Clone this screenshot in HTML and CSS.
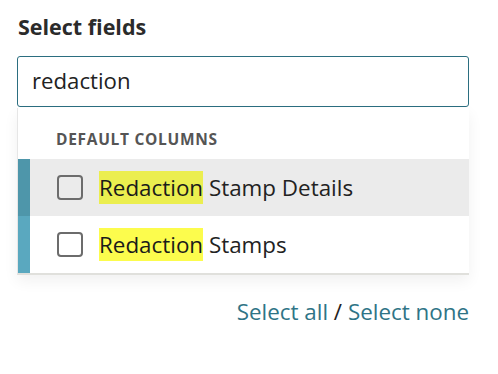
FILE: index.html
```html
<!DOCTYPE html>
<html>
<head>
<meta charset="utf-8">
<link rel="stylesheet" href="styles.css">
</head>
<body>
<div class="panel">
  <div class="title">Select fields</div>
  <div class="input">redaction</div>
  <div class="dropdown">
    <div class="group">DEFAULT COLUMNS</div>
    <div class="option hover">
      <span class="box"></span>
      <span class="label"><mark>Redaction</mark> Stamp Details</span>
    </div>
    <div class="option">
      <span class="box"></span>
      <span class="label"><mark>Redaction</mark> Stamps</span>
    </div>
  </div>
  <div class="actions"><a>Select all</a> / <a>Select none</a></div>
</div>
</body>
</html>
```
FILE: styles.css
```css
html, body { margin: 0; padding: 0; background: #fff; }
body { font-family: "Open Sans", "Noto Sans", sans-serif; color: #222; }
.panel { width: 452px; padding: 12px 0 0 17px; }
.title { font-size: 21.5px; font-weight: 700; color: #2b2b2b; line-height: 30px; padding-left: 1px; }
.input {
  margin-top: 14px;
  height: 49px;
  border: 1px solid #2b6e80;
  border-radius: 3px;
  box-sizing: content-box;
  font-size: 22.2px;
  line-height: 48px;
  padding-left: 14px;
  color: #222;
  width: 436px;
}
.dropdown {
  margin-top: 1px;
  border-left: 1px solid #e6e6e6;
  border-bottom: 2px solid #e0e0dc;
  box-shadow: 0 6px 14px rgba(0,0,0,0.06);
  background: #fff;
}
.group {
  font-size: 15.5px; font-weight: 700; letter-spacing: 0.7px; color: #555;
  padding: 20px 0 0 38px; height: 31px; line-height: 22px;
}
.option {
  display: flex; align-items: center; height: 57px;
  border-left: 12px solid #5aa8bf;
  background: #fff;
}
.option.hover { background: #ebebeb; border-left-color: #4e96aa; }
.box {
  width: 22px; height: 21px; border: 2px solid #6c6c6c; border-radius: 4px;
  margin-left: 27px; flex: none;
}
.label { font-size: 22.4px; margin-left: 16px; line-height: 31px; color: #222; }
mark { background: #fcfc4d; color: #1a1a1a; padding: 1px 0; }
.option.hover mark { background: #ebee4f; }
.actions { text-align: right; font-size: 22.4px; padding-top: 21px; padding-right: 0; color: #222; }
.actions a { color: #2f7486; }
```
